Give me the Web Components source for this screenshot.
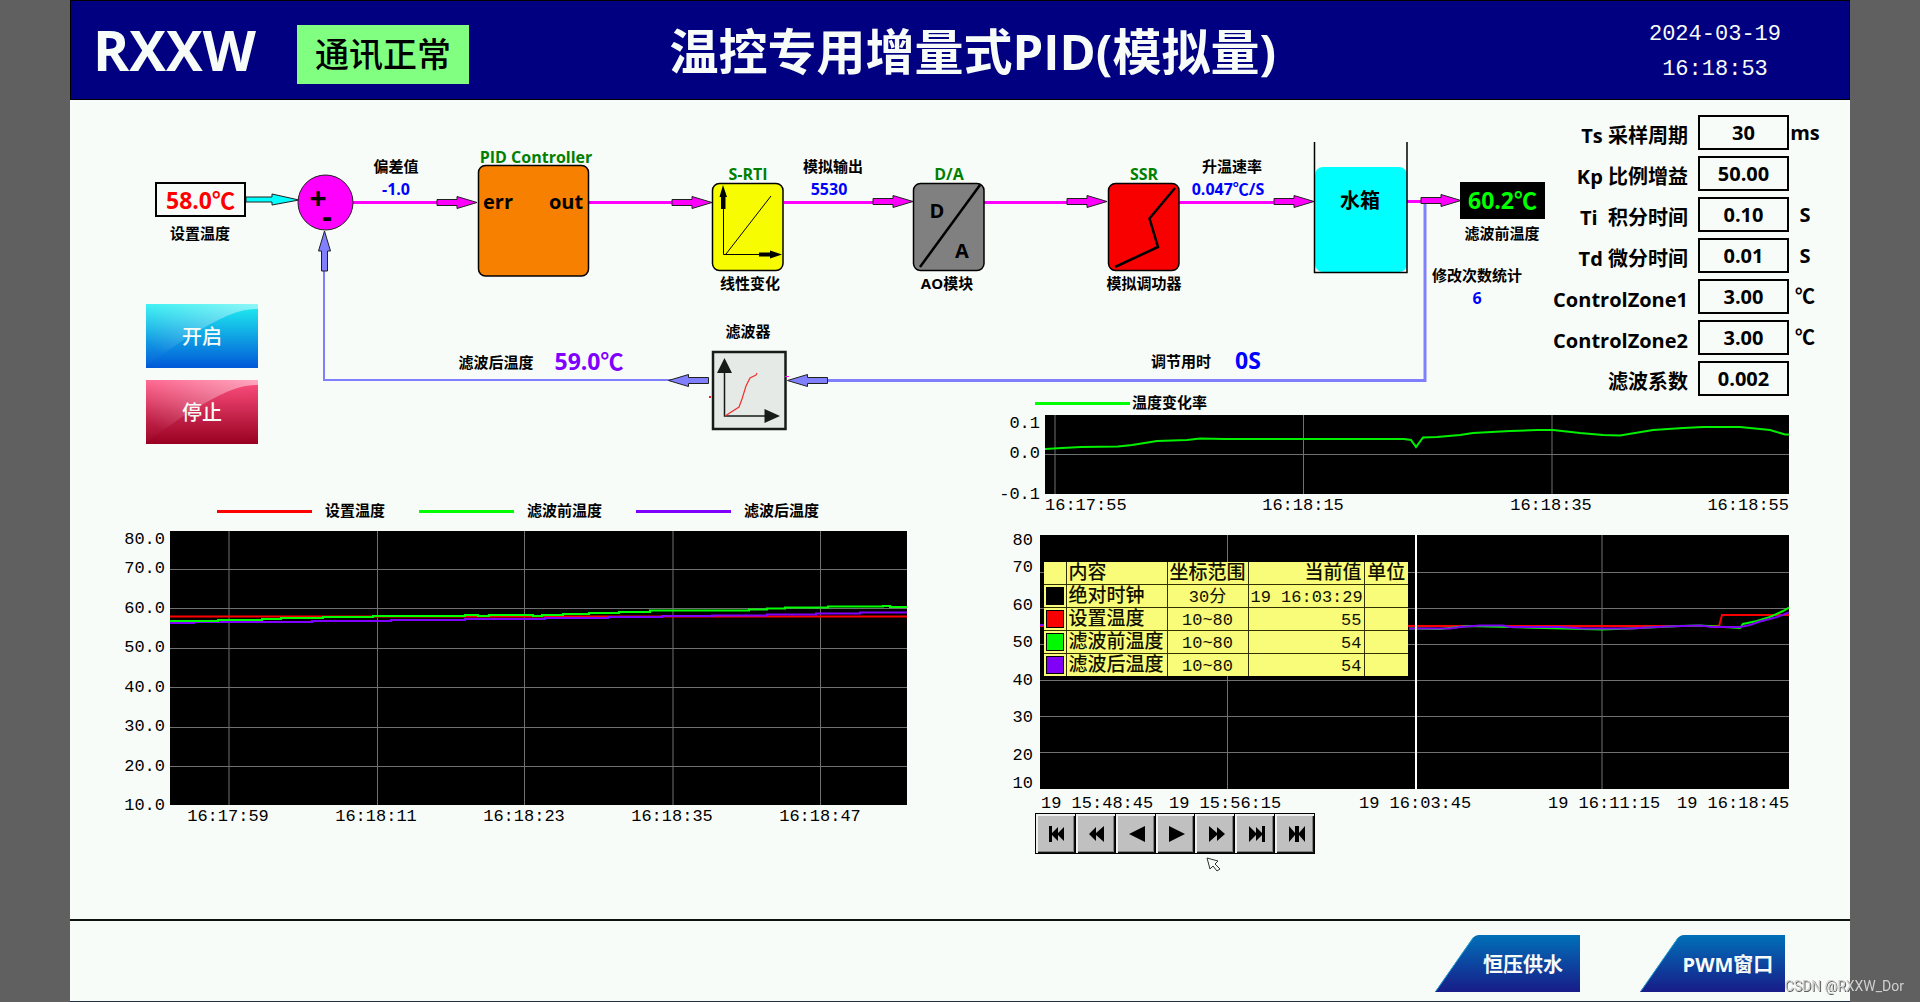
<!DOCTYPE html>
<html lang="zh-CN">
<head>
<meta charset="utf-8">
<title>温控专用增量式PID(模拟量)</title>
<style>
  html, body { margin: 0; }
  body {
    background: #606060;
    color: #000;
    --sans: "Open Sans", "Noto Sans CJK SC", sans-serif;
    --mono: "Liberation Mono", "Noto Sans CJK SC", monospace;
    --han: "Noto Sans CJK SC", sans-serif;
    font-family: var(--sans);
  }
</style>
</head>
<body>
<hmi-screen></hmi-screen>

<script>
const define = (name, html, setup) => {
  const template = document.createElement('template');
  template.innerHTML = html;
  customElements.define(name, class extends HTMLElement {
    constructor() {
      super();
      this.attachShadow({ mode: 'open' }).append(template.content.cloneNode(true));
    }
    connectedCallback() {
      if (setup) setup(this, this.shadowRoot);
    }
  });
};

/* ---------- header ---------- */
define('app-header', `
<style>
  :host { display: block; }
  header {
    display: flex; align-items: center; box-sizing: border-box; height: 100px;
    background: #000080; border: 1px solid #000; color: #f8fcf8;
  }
  .brand { flex: none; width: 204px; padding: 0 0 0 22px; font: bold 55px/60px var(--sans); }
  .status {
    flex: none; width: 172px; height: 59px; margin-top: 8px; background: #80ff80; color: #000;
    font: 500 34px/55px var(--han); text-align: center;
  }
  h1 { flex: 1006 1 0; margin: 0; padding-top: 2px; text-align: center; font: bold 49px/60px var(--sans); white-space: nowrap; }
  .clock {
    flex: 304 1 0; display: flex; justify-content: flex-end;
    padding: 4px 68px 0 0; font: 22px/35px var(--mono); text-align: center;
  }
</style>
<header>
  <div class="brand">RXXW</div>
  <div class="status" role="status">通讯正常</div>
  <h1>温控专用增量式PID(模拟量)</h1>
  <div class="clock"><div><time>2024-03-19</time><br><time>16:18:53</time></div></div>
</header>`);

/* ---------- pieces of the control loop ---------- */
const place = host => {
  host.style.left = host.getAttribute('x') + 'px';
  host.style.top = host.getAttribute('y') + 'px';
};

define('flow-label', `
<style>
  :host {
    position: absolute; transform: translate(-50%, -50%); white-space: nowrap;
    font: bold 15px/20px var(--sans);
  }
  :host([tone]) { font-size: 16px; }
  :host([size="m"]) { font-size: 20px; line-height: 24px; }
  :host([size="l"]) { font-size: 23px; line-height: 28px; }
  :host([size="xl"]) { font-size: 30px; line-height: 30px; }
  :host([tone="title"]) { color: #008000; }
  :host([tone="value"]) { color: #0000ff; }
  :host([tone="filtered"]) { color: #8000ff; }
</style><slot></slot>`, place);

define('flow-setpoint', `
<style>
  :host { position: absolute; }
  input {
    display: block; box-sizing: border-box; width: 91px; height: 35px; margin: 0; padding: 0 0 2px;
    border: 2px solid #000; border-radius: 0; background: #f8fcf8; color: #f00;
    font: bold 23px/28px var(--sans); text-align: center;
  }
</style><input aria-label="设置温度" value="58.0℃">`, place);

define('flow-display', `
<style>
  :host {
    position: absolute; width: 85px; height: 37px; background: #000; color: #00ff00;
    font: bold 23px/36px var(--sans); text-align: center;
  }
</style><slot></slot>`, place);

define('glossy-button', `
<style>
  :host { display: block; }
  button {
    display: block; position: relative; width: 112px; height: 64px; margin: 0; padding: 0; border: 0;
    background: linear-gradient(var(--from), var(--to)); color: #f8fcf8;
    font: 500 20px/62px var(--han);
  }
  svg { position: absolute; inset: 0; width: 100%; height: 100%; }
  span { position: relative; }
</style>
<button type="button">
  <svg viewBox="0 0 112 64" preserveAspectRatio="none" aria-hidden="true">
    <defs><linearGradient id="shine" x1="0" y1="0.6" x2="1" y2="0">
      <stop offset="0" stop-color="#fff" stop-opacity=".02"/><stop offset="1" stop-color="#fff" stop-opacity=".5"/>
    </linearGradient></defs>
    <path fill="url(#shine)" d="M0 0H112V5C88 5 68 18 44 32C26 43 12 54 0 62Z"/>
  </svg>
  <span><slot></slot></span>
</button>`, host => {
  host.style.setProperty('--from', host.getAttribute('from'));
  host.style.setProperty('--to', host.getAttribute('to'));
});

define('pid-loop', `
<style>
  :host { display: block; position: relative; height: 344px; }
  .wires { position: absolute; left: 0; top: 0; width: 1480px; height: 344px; }
  .commands { position: absolute; left: 76px; top: 204px; display: flex; flex-direction: column; gap: 12px; }
</style>
<svg class="wires" viewBox="70 100 1480 344" aria-hidden="true">
  <defs>
    <path id="arrow" d="M0 -3H20V-6L40 0L20 6V3H0Z" stroke="#202020"/>
  </defs>
  <g stroke="#ff00ff" stroke-width="3" fill="none">
    <path d="M353 202.500H440M588 202.500H674M784 202.500H875M984 202.500H1069M1179 202.500H1277M1407 201.500H1424"/>
  </g>
  <path d="M1425 204V380.500H824" stroke="#8080ff" stroke-width="3" fill="none"/>
  <path d="M676 380H324V268" stroke="#8080ff" stroke-width="2" fill="none"/>
  <path d="M246 197H272V194L299 200L272 205V202H246Z" fill="#00ffff" stroke="#202020"/>
  <circle cx="325.500" cy="202.500" r="27.500" fill="#ff00ff" stroke="#202020"/>
  <g fill="#ff00ff">
    <use href="#arrow" x="437" y="202.500"/><use href="#arrow" x="672" y="202.500"/>
    <use href="#arrow" x="873" y="201.500"/><use href="#arrow" x="1067" y="201.500"/>
    <use href="#arrow" x="1274" y="201.500"/><use href="#arrow" x="1421" y="200.500"/>
  </g>
  <g fill="#8080ff">
    <use href="#arrow" transform="translate(827.500 380.500) rotate(180)"/>
    <use href="#arrow" transform="translate(708.500 380.500) rotate(180)"/>
    <use href="#arrow" transform="translate(324.500 271) rotate(-90)"/>
  </g>
  <g stroke="#000" stroke-width="1.500">
    <rect x="478.500" y="165.500" width="110" height="110.500" rx="7" fill="#f88000"/>
    <rect x="712.500" y="183.500" width="70.500" height="87" rx="7" fill="#f8fc00"/>
    <rect x="913.500" y="183.500" width="70.500" height="87" rx="7" fill="#808080"/>
    <rect x="1108.500" y="183.500" width="70.500" height="87" rx="7" fill="#f80000"/>
  </g>
  <path d="M723.500 190V254.500H775M726 254L771 196" stroke="#000" fill="none"/>
  <path d="M723 185L727 197H725.500V209H721V197H719.500ZM782 254.500L770 250.500V252.500H759V256.500H770V258.500Z"/>
  <path d="M980 185L920 267" stroke="#000" stroke-width="2.500"/>
  <path d="M1175 188L1149.500 218.500L1158 247L1115 267" stroke="#000" stroke-width="2.500" fill="none"/>
  <rect x="1315" y="167" width="92" height="105" rx="8" fill="#00ffff"/>
  <path d="M1314.500 142V272.500H1407V142" stroke="#000" stroke-width="1.500" fill="none"/>
  <rect x="713" y="352" width="72.500" height="77" fill="#e6eae6" stroke="#181c18" stroke-width="2.500"/>
  <path d="M724.500 372V416H766" stroke="#181c18" stroke-width="1.500" fill="none"/>
  <path d="M724.500 358L732 373H717ZM780 416L764.500 409V423Z" fill="#181c18"/>
  <path d="M725 416L739 407L742 399L746 386L750 378L756 375L757 373" stroke="#f03030" stroke-width="1.200" fill="none"/>
  <path d="M709 397H711" stroke="#f02020" stroke-width="2"/><path d="M785 376.500H789" stroke="#ff00ff"/>
</svg>

<flow-setpoint x="85" y="82"></flow-setpoint>
<flow-label x="130" y="133">设置温度</flow-label>
<flow-label x="248" y="98" size="xl">+</flow-label>
<flow-label x="257" y="116" size="xl">-</flow-label>
<flow-label x="326" y="66">偏差值</flow-label>
<flow-label x="326" y="89" tone="value">-1.0</flow-label>
<flow-label x="466" y="57" tone="title">PID Controller</flow-label>
<flow-label x="428" y="102" size="m">err</flow-label>
<flow-label x="496" y="102" size="m">out</flow-label>
<flow-label x="678" y="74" tone="title">S-RTI</flow-label>
<flow-label x="680" y="183">线性变化</flow-label>
<flow-label x="763" y="66">模拟输出</flow-label>
<flow-label x="759" y="89" tone="value">5530</flow-label>
<flow-label x="879" y="74" tone="title">D/A</flow-label>
<flow-label x="867" y="111" size="m">D</flow-label>
<flow-label x="892" y="151" size="m">A</flow-label>
<flow-label x="877" y="183">AO模块</flow-label>
<flow-label x="1074" y="74" tone="title">SSR</flow-label>
<flow-label x="1074" y="183">模拟调功器</flow-label>
<flow-label x="1162" y="66">升温速率</flow-label>
<flow-label x="1158" y="89" tone="value">0.047℃/S</flow-label>
<flow-label x="1290" y="101" size="m">水箱</flow-label>
<flow-display x="1390" y="82">60.2℃</flow-display>
<flow-label x="1432" y="133">滤波前温度</flow-label>
<flow-label x="1407" y="175">修改次数统计</flow-label>
<flow-label x="1407" y="198" tone="value">6</flow-label>
<flow-label x="1111" y="261">调节用时</flow-label>
<flow-label x="1178" y="260" size="l" tone="value">0S</flow-label>
<flow-label x="678" y="231">滤波器</flow-label>
<flow-label x="426" y="262">滤波后温度</flow-label>
<flow-label x="519" y="261" size="l" tone="filtered">59.0℃</flow-label>

<div class="commands">
  <glossy-button from="#20f0f0" to="#0058d8">开启</glossy-button>
  <glossy-button from="#ff5080" to="#980020">停止</glossy-button>
</div>`);

/* ---------- tuning parameters ---------- */
define('param-row', `
<style>
  :host { display: block; }
  label {
    display: grid; grid-template-columns: 1fr 91px 32px; align-items: center; height: 35px;
    font: bold 20px/28px var(--sans);
  }
  .name { text-align: right; white-space: pre; padding: 6px 10px 0 0; }
  input {
    box-sizing: border-box; width: 91px; height: 35px; margin: 0; padding: 0 0 1px; border: 2px solid #000;
    border-radius: 0; background: #f8fcf8; color: #000; font: inherit; text-align: center;
  }
  .unit { text-align: center; }
</style>
<label><span class="name"></span><input><span class="unit"></span></label>`, (host, root) => {
  root.querySelector('.name').textContent = host.getAttribute('name');
  root.querySelector('input').value = host.getAttribute('value');
  root.querySelector('.unit').textContent = host.getAttribute('unit') || '';
});

define('param-panel', `
<style>
  :host { display: flex; flex-direction: column; gap: 6px; width: 271px; padding: 15px 29px 0 0; }
</style>
<param-row name="Ts 采样周期" value="30" unit="ms"></param-row>
<param-row name="Kp 比例增益" value="50.00"></param-row>
<param-row name="Ti  积分时间" value="0.10" unit="S"></param-row>
<param-row name="Td 微分时间" value="0.01" unit="S"></param-row>
<param-row name="ControlZone1" value="3.00" unit="℃"></param-row>
<param-row name="ControlZone2" value="3.00" unit="℃"></param-row>
<param-row name="滤波系数" value="0.002"></param-row>`);

/* ---------- charts ---------- */
define('legend-item', `
<style>
  :host { display: flex; align-items: center; gap: var(--legend-gap, 13px); font: bold 15px/12px var(--sans); white-space: nowrap; }
  i { width: 95px; height: 3px; background: var(--ink); }
  span { padding-bottom: 2px; }
</style><i></i><span><slot></slot></span>`, host => host.style.setProperty('--ink', host.getAttribute('color')));

define('trend-chart', `
<style>
  :host { display: grid; grid-template-columns: var(--axis) minmax(0, 1fr); grid-template-rows: var(--plot-height) auto; font: 17px/20px var(--mono); }
  .y { grid-row: 1 / 3; display: grid; align-self: start; align-items: center; justify-items: end; padding-right: var(--y-gap, 5px); }
  .plot { position: relative; background: #000; }
  .x { display: grid; margin: var(--x-top, 2px) 0 0 var(--x-left, 0px); white-space: pre; height: 20px; justify-items: var(--x-align, center); }
  .x span:first-child { justify-self: var(--x-first, auto); }
  .x span:last-child { justify-self: var(--x-last, auto); }
</style>
<div class="y"></div>
<div class="plot"><slot></slot></div>
<div class="x"></div>`, (host, root) => {
  const fill = (box, texts) => box.replaceChildren(...texts.split('|').map(t => {
    const s = document.createElement('span');
    s.textContent = t;
    return s;
  }));
  const y = root.querySelector('.y'), x = root.querySelector('.x');
  fill(y, host.getAttribute('y-labels'));
  fill(x, host.getAttribute('x-labels'));
  y.style.gridTemplateRows = host.getAttribute('y-rows').split(' ').map(n => n + 'px').join(' ');
  x.style.gridTemplateColumns = host.getAttribute('x-cols').split(' ').map(n => `minmax(0, ${n}fr)`).join(' ');
});

const plotStyle = `
  svg.plot { display: block; width: 100%; height: 100%; fill: none; stroke-width: 2; }
  svg.plot path { vector-effect: non-scaling-stroke; }
  .grid { stroke: #707070; stroke-width: 1; }`;

define('temperature-trend', `
<style>
  :host { display: block; }
  .legend { display: flex; gap: 34px; height: 14px; margin: 0 0 13px 147px; }
  trend-chart { --axis: 100px; --plot-height: 274px; --x-left: -16px; }
  ${plotStyle}
</style>
<div class="legend">
  <legend-item color="#ff0000">设置温度</legend-item>
  <legend-item color="#00ff00">滤波前温度</legend-item>
  <legend-item color="#8000ff">滤波后温度</legend-item>
</div>
<trend-chart y-labels="80.0|70.0|60.0|50.0|40.0|30.0|20.0|10.0" y-rows="18 40 39 40 39 40 39 40"
  x-labels="16:17:59|16:18:11|16:18:23|16:18:35|16:18:47|" x-cols="148 148 148 148 148 13">
  <svg class="plot" viewBox="0 0 737 274" preserveAspectRatio="none" role="img" aria-label="温度曲线">
    <path class="grid" d="M0 38.500H737M0 77.500H737M0 117.500H737M0 156.500H737M0 196.500H737M0 235.500H737M59 0V274M207.500 0V274M354.500 0V274M503 0V274M650.500 0V274"/>
    <path stroke="#ff0000" d="M0 85.500H737"/>
    <path stroke="#8000ff" d="M0 92H24V91H142V90H221V89H295V88H375V87H438V86H492V85H542V84.500H597V83.500H646V82.500H690V81.500H737"/>
    <path stroke="#00ff00" d="M0 90H48V89H92V88H111V87H153V86H203V85H295V84H308V85H319V84H363V85H372V84H393V83H419V82H449V81H480V79.500H579V78.500H597V77.500H615V76.500H658V75.500H713V75H720V76H737"/>
  </svg>
</trend-chart>`);

define('rate-trend', `
<style>
  :host { display: block; }
  .legend { display: flex; height: 14px; margin: 0 0 5px 50px; --legend-gap: 2px; }
  trend-chart { --axis: 60px; --plot-height: 79px; --x-first: start; --x-last: end; }
  ${plotStyle}
</style>
<div class="legend"><legend-item color="#00ff00">温度变化率</legend-item></div>
<trend-chart y-labels="0.1|0.0|-0.1" y-rows="18 42 40"
  x-labels="16:17:55|16:18:15|16:18:35|16:18:55" x-cols="134 248 248 114">
  <svg class="plot" viewBox="0 0 744 79" preserveAspectRatio="none" role="img" aria-label="温度变化率曲线">
    <path class="grid" d="M0 39.500H744M10 0V79M258.500 0V79M507 0V79"/>
    <path stroke="#00f000" d="M0 34L17 33L36 32L73 31.500L87 30L112 26L142 25L155 23.500L180 24L222 24H359L366 25L371 32L378 22.500L392 22L415 20L428 18L465 16L492 15H508L535 18L558 20L575 20.500L608 15L638 13L658 12H695L725 15L740 19.500H744"/>
  </svg>
</trend-chart>`);

define('cursor-table', `
<style>
  :host { display: block; }
  table { border-collapse: collapse; table-layout: fixed; width: 364px; height: 112px; background: #f8fc78; color: #101000; }
  th, td { box-sizing: border-box; height: 22px; padding: 2px 2px 0; border: 1px solid #303000; font: 17px/19px var(--mono); white-space: nowrap; text-align: center; }
  th { font: 500 19px/19px var(--mono); padding-top: 3px; }
  tr:first-child > * { border-top: 0; }
  tr > :first-child { border-left: 0; padding: 1px 2px; }
  tr > :last-child { border-right: 0; }
  tbody tr:last-child > * { border-bottom: 0; }
  tbody th, .name { text-align: left; }
  .num { text-align: right; }
  tbody tr:first-child > * { border-top: 1px solid #303000; }
  i { display: block; box-sizing: border-box; width: 18px; height: 18px; border: 1px solid #000; background: var(--ink); }
</style>
<table>
  <colgroup><col style="width:22px"><col style="width:101px"><col style="width:81px"><col style="width:116px"><col style="width:44px"></colgroup>
  <thead><tr><th></th><th class="name">内容</th><th>坐标范围</th><th class="num">当前值</th><th>单位</th></tr></thead>
  <tbody>
    <tr><td><i style="--ink:#000"></i></td><th>绝对时钟</th><td>30分</td><td class="num">19 16:03:29</td><td></td></tr>
    <tr><td><i style="--ink:#f80000"></i></td><th>设置温度</th><td>10~80</td><td class="num">55</td><td></td></tr>
    <tr><td><i style="--ink:#00f800"></i></td><th>滤波前温度</th><td>10~80</td><td class="num">54</td><td></td></tr>
    <tr><td><i style="--ink:#8000f8"></i></td><th>滤波后温度</th><td>10~80</td><td class="num">54</td><td></td></tr>
  </tbody>
</table>`);

define('history-toolbar', `
<style>
  :host { display: flex; width: 280px; box-sizing: border-box; border: solid #000; border-width: 1px 0 1px 1px; }
  button {
    flex: 1; height: 39px; box-sizing: border-box; margin: 0; padding: 1px 0 0 4px; background: #c0c0c0; border: 0; border-right: 1px solid #000;
    box-shadow: inset 2px 2px #f0f0f0, inset -1px -1px #101010, inset -2px -2px #808080;
  }
  svg { display: block; margin: 0 auto; width: 18px; height: 18px; }
</style>
<button type="button" aria-label="最前"><svg viewBox="0 0 18 18"><path d="M1 1H4V8L10 2V8L16 2V16L10 10V16L4 10V17H1Z"/></svg></button>
<button type="button" aria-label="快退"><svg viewBox="0 0 18 18"><path d="M1 9L8 2V8L16 1V17L8 10V16Z"/></svg></button>
<button type="button" aria-label="后退"><svg viewBox="0 0 18 18"><path d="M1 9L17 1V17Z"/></svg></button>
<button type="button" aria-label="前进"><svg viewBox="0 0 18 18"><path d="M17 9L1 1V17Z"/></svg></button>
<button type="button" aria-label="快进"><svg viewBox="0 0 18 18"><path d="M17 9L9 2V8L1 1V17L9 10V16Z"/></svg></button>
<button type="button" aria-label="最后"><svg viewBox="0 0 18 18"><path d="M17 1H14V8L8 2V8L1 1V17L8 10V16L14 10V17H17Z"/></svg></button>
<button type="button" aria-label="当前"><svg viewBox="0 0 18 18"><path d="M1 1L7 8V1H11V8L17 1V17L11 10V17H7V10L1 17Z"/></svg></button>`);

define('history-trend', `
<style>
  :host { display: block; }
  trend-chart { --axis: 55px; --plot-height: 254px; --y-gap: 7px; --x-top: 5px; --x-align: start; --x-left: 1px; }
  cursor-table { position: absolute; left: 4px; top: 27px; }
  history-toolbar { margin: -1px 0 0 50px; }
  ${plotStyle}
</style>
<trend-chart y-labels="80|70|60|50|40|30|20|10" y-rows="12 41 35 39 37 38 37 20"
  x-labels="19 15:48:45|19 15:56:15|19 16:03:45|19 16:11:15|19 16:18:45" x-cols="128 190 189 129 112">
  <svg class="plot" viewBox="0 0 749 254" preserveAspectRatio="none" role="img" aria-label="历史温度曲线">
    <path class="grid" d="M0 37.500H749M0 73.500H749M0 109.500H749M0 145.500H749M0 181.500H749M0 217.500H749M187.500 0V254M562 0V254"/>
    <path stroke="#f80000" d="M0 91H679L682 80H749"/>
    <path stroke="#00f800" d="M369 93.500L400 94L428 91L470 92L562 94.500L590 93.500L640 91L660 90.500L700 93L703 89L717 86L730 82L743 76L749 72.500"/>
    <path stroke="#8000f8" stroke-width="2" d="M0 90H4M369 93.500H410L420 92L440 90.500H463L470 92H520L543 93.500H590L627 91.500L660 90.500L672 92H700L710 90L720 86.500L737 82L749 77.500"/>
    <path stroke="#fff" d="M376 0V254"/>
  </svg>
  <cursor-table></cursor-table>
</trend-chart>
<history-toolbar></history-toolbar>`);

/* ---------- footer ---------- */
define('page-link', `
<style>
  :host { display: block; }
  a { display: block; position: relative; width: 145px; height: 57px; color: #f8fcf8; text-decoration: none; font: bold 20px/59px var(--sans); }
  svg { position: absolute; inset: 0; width: 100%; height: 100%; }
  span { position: relative; display: block; padding-left: 31px; text-align: center; }
</style>
<a href="#">
  <svg viewBox="0 0 145 57" aria-hidden="true">
    <defs><linearGradient id="blue" x2="0" y2="1"><stop stop-color="#0070b8"/><stop offset="1" stop-color="#181c88"/></linearGradient></defs>
    <path d="M0 57L37 4Q40 0 44 0H145V57Z" fill="url(#blue)"/>
    <path d="M1 56L38 3" stroke="#20a0d0"/>
  </svg>
  <span><slot></slot></span>
</a>`);

define('app-footer', `
<style>
  :host { display: block; }
  footer { display: flex; justify-content: flex-end; gap: 60px; padding: 14px 65px 9px 0; border-top: 2px solid #101010; border-bottom: 1px solid #203040; }
</style>
<footer><page-link>恒压供水</page-link><page-link>PWM窗口</page-link></footer>`);

/* ---------- page ---------- */
define('hmi-screen', `
<style>
  :host { display: flex; flex-direction: column; min-height: 100vh; margin: 0 70px; background: #f8fcf8; }
  main { flex: 1; display: grid; grid-template-columns: 915fr 865fr; grid-template-rows: auto auto 1fr; }
  pid-loop { grid-area: 1 / 1 / 3 / 3; }
  param-panel { grid-area: 1 / 2; justify-self: end; z-index: 1; }
  temperature-trend { grid-area: 2 / 1 / 4 / 2; margin: 108px 78px 0 0; }
  rate-trend { grid-area: 2 / 2; margin-right: 61px; }
  history-trend { grid-area: 3 / 2; margin: 19px 61px 0 0; }
  .mark { position: fixed; right: 16px; bottom: 6px; color: #d0d0d0; font: 14px/20px Roboto, sans-serif; text-shadow: 1px 1px #606060; }
  .pointer { position: fixed; left: 1206px; top: 857px; width: 14px; height: 16px; }
</style>
<app-header></app-header>
<main>
  <pid-loop></pid-loop>
  <param-panel></param-panel>
  <rate-trend></rate-trend>
  <temperature-trend></temperature-trend>
  <history-trend></history-trend>
</main>
<app-footer></app-footer>
<svg class="pointer" viewBox="0 0 14 16" aria-hidden="true"><path d="M1 1L12 4L9 7L14 12L11 14L7 9L4 12Z" fill="#f8fcf8" stroke="#303030"/></svg>
<div class="mark">CSDN @RXXW_Dor</div>`);
</script>
</body>
</html>
